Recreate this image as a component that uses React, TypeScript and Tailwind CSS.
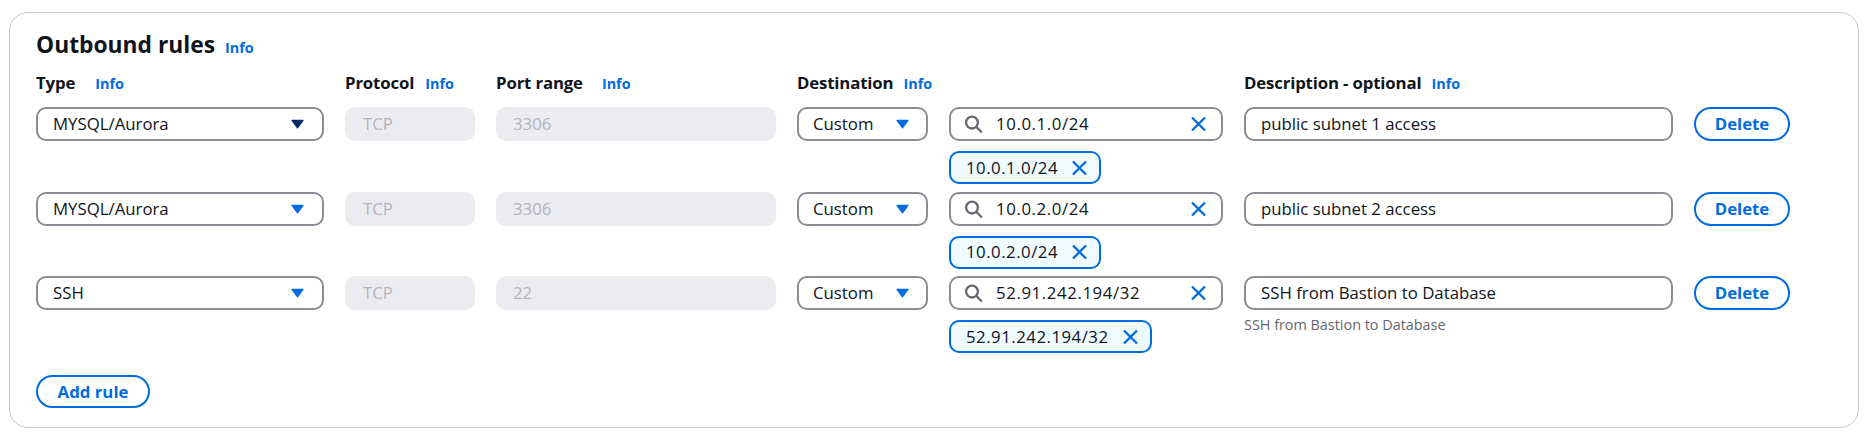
const rules = [
  {
    type: "MYSQL/Aurora",
    port: "3306",
    cidr: "10.0.1.0/24",
    desc: "public subnet 1 access",
    darkCaret: true,
    hint: "",
  },
  {
    type: "MYSQL/Aurora",
    port: "3306",
    cidr: "10.0.2.0/24",
    desc: "public subnet 2 access",
    darkCaret: false,
    hint: "",
  },
  {
    type: "SSH",
    port: "22",
    cidr: "52.91.242.194/32",
    desc: "SSH from Bastion to Database",
    darkCaret: false,
    hint: "SSH from Bastion to Database",
  },
];

const Caret = ({ dark }: { dark?: boolean }) => (
  <svg
    width="13"
    height="10"
    viewBox="0 0 13 10"
    className={dark ? "shrink-0 text-[#002b66]" : "shrink-0 text-[#006ce0]"}
  >
    <path d="M1 0.8h11a0.6 0.6 0 0 1 0.5 0.9L7 9.2a0.6 0.6 0 0 1-1 0L0.5 1.7A0.6 0.6 0 0 1 1 0.8z" fill="currentColor" />
  </svg>
);

const XIcon = () => (
  <svg
    width="17"
    height="16"
    viewBox="0 0 17 16"
    fill="none"
    stroke="currentColor"
    strokeWidth="2.3"
    className="shrink-0 text-[#006ce0]"
  >
    <path d="M2 1.5l13 13M15 1.5l-13 13" />
  </svg>
);

const SearchIcon = () => (
  <svg
    width="19"
    height="18"
    viewBox="0 0 19 18"
    fill="none"
    stroke="currentColor"
    strokeWidth="2.3"
    className="shrink-0 text-[#656871]"
  >
    <circle cx="8" cy="7.6" r="5.9" />
    <path d="M12.4 12l4.8 4.8" strokeLinecap="round" />
  </svg>
);

const Info = ({ className = "" }: { className?: string }) => (
  <a className={"text-[14.4px] font-bold leading-[18px] text-[#006ce0] " + className}>Info</a>
);

const Label = ({ text, gap }: { text: string; gap: string }) => (
  <div className="flex items-baseline">
    <span className="text-[16.8px] font-bold leading-[20px] tracking-[-0.15px]">{text}</span>
    <Info className={gap} />
  </div>
);

const field =
  "flex h-[34px] items-center rounded-[10px] border-2 border-[#8c8c94] bg-white text-[16.8px] leading-[20px]";
const disabled =
  "flex h-[34px] items-center rounded-[10px] bg-[#ebebf0] text-[16.8px] leading-[20px] text-[#b4b4bb]";

const App = () => {
  return (
    <div className="min-h-screen bg-white pl-[9px] pt-[12px] font-['Open_Sans',sans-serif] text-[#0f141a]">
      <div className="w-[1850px] rounded-[19px] border border-[#c6c6cd] pb-[19px] pl-[26px] pt-[17px]">
        <div className="flex items-baseline">
          <h2 className="text-[22.8px] font-bold leading-[30px]">Outbound rules</h2>
          <Info className="ml-[10px]" />
        </div>

        <div className="mt-[12.5px] grid grid-cols-[288px_130px_280px_131px_274px_429px_96px] gap-x-[21px]">
          <Label text="Type" gap="ml-[20px]" />
          <Label text="Protocol" gap="ml-[11px]" />
          <Label text="Port range" gap="ml-[19px]" />
          <div className="col-span-2">
            <Label text="Destination" gap="ml-[10px]" />
          </div>
          <Label text="Description - optional" gap="ml-[10px]" />
        </div>

        <div className="mt-[14.5px] flex flex-col gap-[7.5px]">
          {rules.map((r, i) => (
            <div
              key={i}
              className="grid grid-cols-[288px_130px_280px_131px_274px_429px_96px] items-start gap-x-[21px]"
            >
              <div className={field + " justify-between pl-[15px] pr-[18px]"}>
                <span>{r.type}</span>
                <Caret dark={r.darkCaret} />
              </div>
              <div className={disabled + " pl-[18px]"}>TCP</div>
              <div className={disabled + " pl-[17px]"}>{r.port}</div>
              <div className={field + " justify-between pl-[14px] pr-[17px]"}>
                <span>Custom</span>
                <Caret />
              </div>
              <div>
                <div className={field + " pl-[13px] pr-[14px]"}>
                  <SearchIcon />
                  <span className="ml-[13px] flex-1 tracking-[0.6px]">{r.cidr}</span>
                  <XIcon />
                </div>
                <div className="mt-[10px] flex">
                  <span className="inline-flex h-[33px] items-center gap-[13px] rounded-[10px] border-2 border-[#006ce0] bg-[#f0fbff] pl-[15px] pr-[11px] text-[16.8px] leading-[20px]">
                    <span className="tracking-[0.5px]">{r.cidr}</span>
                    <XIcon />
                  </span>
                </div>
              </div>
              <div>
                <div className={field + " pl-[15px]"}>{r.desc}</div>
                {r.hint && (
                  <p className="mt-[6px] text-[14.4px] leading-[17px] text-[#656871]">{r.hint}</p>
                )}
              </div>
              <button className="flex h-[34px] items-center justify-center rounded-full border-2 border-[#006ce0] text-[16.8px] font-bold leading-[20px] text-[#006ce0]">
                Delete
              </button>
            </div>
          ))}
        </div>

        <button className="mt-[22px] flex h-[33px] w-[114px] items-center justify-center rounded-full border-2 border-[#006ce0] text-[16.8px] font-bold leading-[20px] text-[#006ce0]">
          Add rule
        </button>
      </div>
    </div>
  );
};

export default App;
